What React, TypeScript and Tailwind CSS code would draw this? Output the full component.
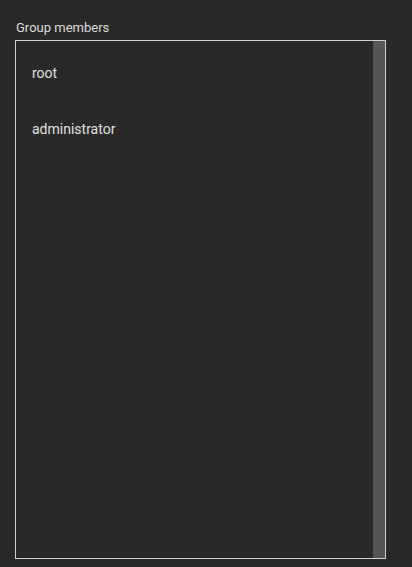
export default function App() {
  return (
    <div className="w-[412px] h-[567px] bg-[#292929] overflow-hidden" style={{ fontFamily: 'Roboto, "Noto Sans", sans-serif' }}>
      <div className="pt-[20px] pl-[15px]">
        <div className="text-[13px] leading-[16px] mb-[4px] text-[#dcdcdc] pl-[1px]">Group members</div>
        <div className="w-[371px] h-[519px] border border-[#d0d0d0] flex">
          <div className="flex-1 pt-[4px]">
            <div className="h-[56px] flex items-center pl-[16px] text-[14px] text-[#e0e0e0]">root</div>
            <div className="h-[56px] flex items-center pl-[16px] text-[14px] text-[#e0e0e0]">administrator</div>
          </div>
          <div className="w-[12px] bg-[#555555]"></div>
        </div>
      </div>
    </div>
  );
}
